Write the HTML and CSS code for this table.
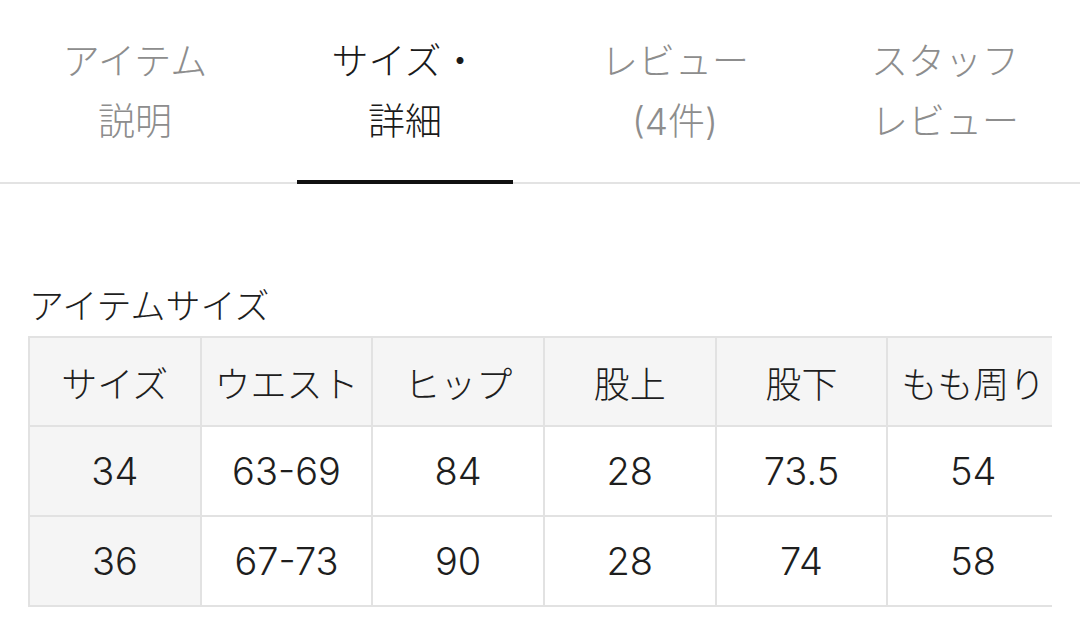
FILE: index.html
```html
<!DOCTYPE html>
<html lang="ja">
<head>
<meta charset="utf-8">
<link rel="stylesheet" href="styles.css">
</head>
<body>
<nav class="tabs">
  <div class="tab">アイテム<br>説明</div>
  <div class="tab active">サイズ・<br>詳細</div>
  <div class="tab">レビュー<br>(4件)</div>
  <div class="tab">スタッフ<br>レビュー</div>
</nav>
<section class="size">
  <h2 class="size-title">アイテムサイズ</h2>
  <div class="table-wrap">
    <table class="size-table">
      <thead>
        <tr><th>サイズ</th><th>ウエスト</th><th>ヒップ</th><th>股上</th><th>股下</th><th>もも周り</th></tr>
      </thead>
      <tbody>
        <tr><th>34</th><td>63-69</td><td>84</td><td>28</td><td>73.5</td><td>54</td></tr>
        <tr><th>36</th><td>67-73</td><td>90</td><td>28</td><td>74</td><td>58</td></tr>
      </tbody>
    </table>
  </div>
</section>
</body>
</html>
```
FILE: styles.css
```css
html, body {
  margin: 0;
  padding: 0;
  background: #fff;
}
body {
  font-family: "Inter", "Noto Sans CJK JP", sans-serif;
  font-weight: 300;
  color: #1e1e1e;
}
.tabs {
  display: grid;
  grid-template-columns: repeat(4, 1fr);
  border-bottom: 2px solid #e3e3e3;
}
.tab {
  position: relative;
  text-align: center;
  font-size: 37px;
  line-height: 60px;
  padding: 32px 0 30px;
  color: #8d8d8d;
}
.tab.active {
  color: #1a1a1a;
}
.tab.active::after {
  content: "";
  position: absolute;
  left: 10%;
  width: 80%;
  bottom: -2px;
  height: 4px;
  background: #111;
}
.size {
  padding: 0 28px 0 28px;
}
.size-title {
  margin: 102px 0 10px 1px;
  font-size: 35px;
  line-height: 40px;
  font-weight: 300;
  color: #1e1e1e;
}
.table-wrap {
  overflow: hidden;
  width: 1024px;
}
.size-table {
  border-collapse: collapse;
  table-layout: fixed;
  width: 1032px;
}
.size-table th,
.size-table td {
  border: 2px solid #e2e2e2;
  height: 88px;
  padding: 0;
  text-align: center;
  vertical-align: middle;
  font-weight: 300;
  color: #1e1e1e;
}
.size-table thead th {
  background: #f5f5f5;
  font-size: 36px;
  height: 87px;
}
.size-table tbody th {
  background: #f5f5f5;
  font-size: 38px;
}
.size-table td {
  font-size: 38px;
}
```
